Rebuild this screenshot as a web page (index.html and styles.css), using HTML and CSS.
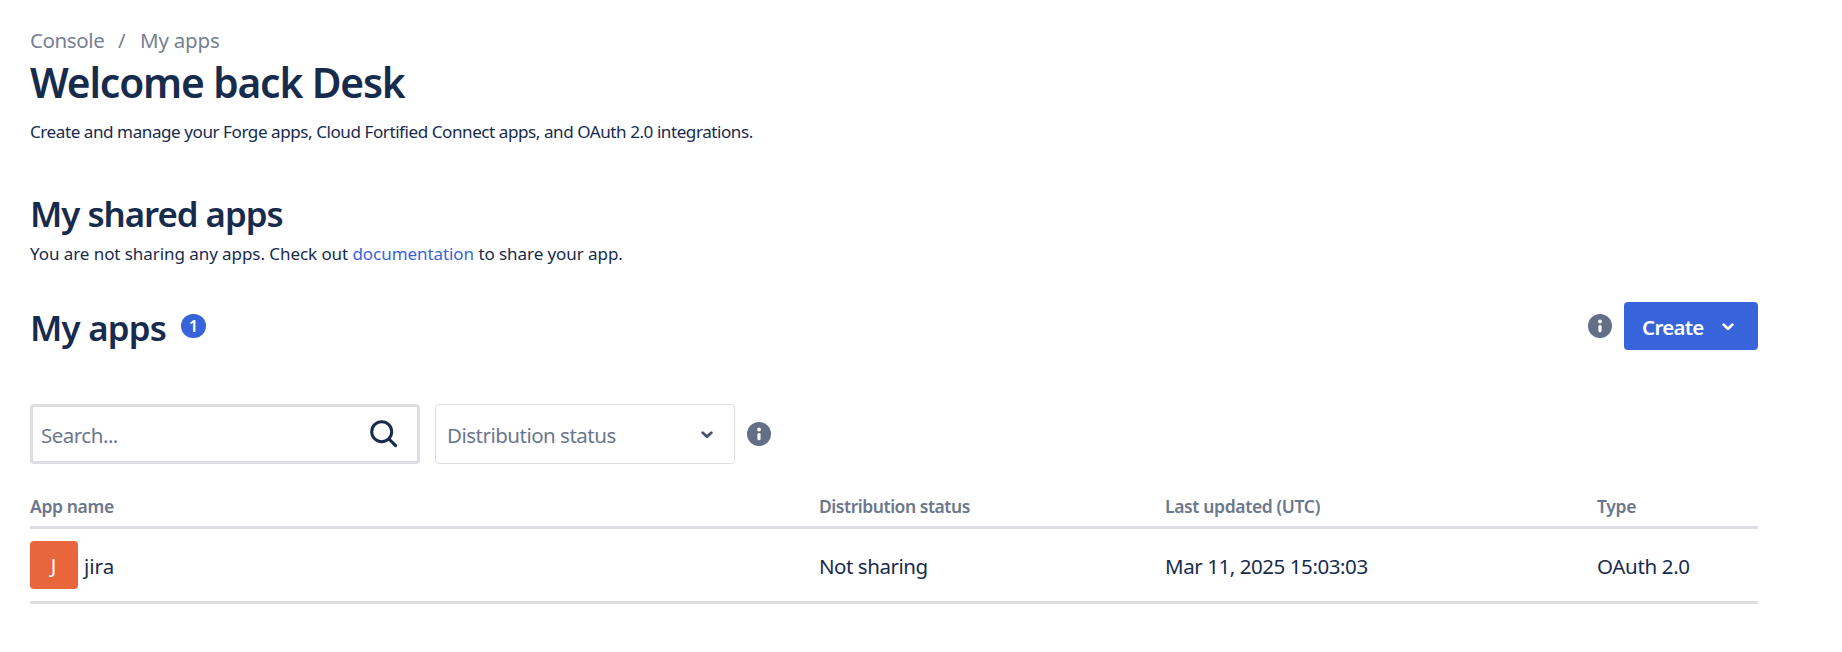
FILE: index.html
```html
<!DOCTYPE html>
<html lang="en">
<head>
<meta charset="utf-8">
<title>My apps</title>
<link rel="stylesheet" href="styles.css">
</head>
<body>
<main class="page">
  <nav class="breadcrumbs"><a class="crumb-root">Console</a><span class="crumb-sep">/</span><a class="crumb-current">My apps</a></nav>
  <h1 class="title">Welcome back Desk</h1>
  <p class="lead">Create and manage your Forge apps, Cloud Fortified Connect apps, and OAuth 2.0 integrations.</p>

  <h2 class="heading heading-shared">My shared apps</h2>
  <p class="shared-note">You are not sharing any apps. Check out <a class="link">documentation</a> to share your app.</p>

  <header class="apps-header">
    <h2 class="heading heading-apps">My apps</h2>
    <span class="badge">1</span>
    <div class="actions">
      <svg class="info" viewBox="0 0 24 24"><circle cx="12" cy="12" r="12" fill="#626f86"/><circle cx="12" cy="7.5" r="1.9" fill="#fff"/><rect x="10.4" y="11" width="3.2" height="7.2" rx="1.5" fill="#fff"/></svg>
      <button class="create"><span class="create-text">Create</span><svg class="chevron" viewBox="0 0 12 8"><path d="M1.7 1.7 6 5.7l4.3-4" fill="none" stroke="currentColor" stroke-width="2.8" stroke-linecap="round" stroke-linejoin="round"/></svg></button>
    </div>
  </header>

  <div class="filters">
    <div class="search"><span class="filter-text">Search...</span><svg class="search-icon" viewBox="0 0 28 28"><circle cx="11.7" cy="11.7" r="10" fill="none" stroke="#172b4d" stroke-width="3"/><path d="m19 19 6.6 6.6" stroke="#172b4d" stroke-width="3" stroke-linecap="round"/></svg></div>
    <div class="select"><span class="filter-text">Distribution status</span><svg class="chevron" viewBox="0 0 12 8"><path d="M1.7 1.7 6 5.7l4.3-4" fill="none" stroke="currentColor" stroke-width="2.8" stroke-linecap="round" stroke-linejoin="round"/></svg></div>
    <svg class="info" viewBox="0 0 24 24"><circle cx="12" cy="12" r="12" fill="#626f86"/><circle cx="12" cy="7.5" r="1.9" fill="#fff"/><rect x="10.4" y="11" width="3.2" height="7.2" rx="1.5" fill="#fff"/></svg>
  </div>

  <section class="table">
    <div class="row row-head"><span class="col-name">App name</span><span class="col-status">Distribution status</span><span class="col-updated">Last updated (UTC)</span><span class="col-type">Type</span></div>
    <div class="row row-body"><div class="app"><span class="avatar">J</span><span class="cell">jira</span></div><span class="cell col-status">Not sharing</span><span class="cell col-updated">Mar 11, 2025 15:03:03</span><span class="cell col-type">OAuth 2.0</span></div>
  </section>
</main>
</body>
</html>
```
FILE: styles.css
```css
* { box-sizing: border-box; }
body { margin: 0; background: #fff; color: #172b4d; font-family: "Noto Sans", "Open Sans", sans-serif; white-space: nowrap; }
h1, h2, p { margin: 0; }
.page { width: 1758px; padding: 25px 0 0 30px; }
.breadcrumbs { display: flex; height: 30px; line-height: 30px; font-size: 20.5px; color: #758195; }
.crumb-root { width: 88px; letter-spacing: -0.4px; }
.crumb-sep { width: 22px; }
.crumb-current { letter-spacing: -0.2px; }
.title { margin-top: 3px; font-size: 40.7px; line-height: 48px; font-weight: 600; letter-spacing: -1.14px; }
.lead { margin-top: 14px; font-size: 17.1px; line-height: 24px; letter-spacing: -0.455px; }
.heading { font-size: 34.8px; line-height: 42px; font-weight: 600; }
.heading-shared { margin-top: 49px; letter-spacing: -1.02px; }
.shared-note { margin-top: 7px; font-size: 17px; line-height: 24px; letter-spacing: -0.065px; }
.link { color: #3864db; }
.apps-header { display: flex; height: 48px; margin-top: 36px; }
.heading-apps { width: 151px; padding-top: 5px; letter-spacing: -0.75px; }
.badge { width: 25px; height: 24px; margin-top: 12px; border-radius: 12px; background: #3864db; color: #fff; font-size: 16.5px; line-height: 24px; font-weight: 600; text-align: center; }
.actions { display: flex; gap: 12px; align-items: center; margin-left: auto; }
.info { width: 24px; height: 24px; flex: none; }
.create { display: flex; align-items: center; justify-content: space-between; width: 134px; height: 48px; padding: 0 24px 0 18px; border: 0; border-radius: 4px; background: #3864db; color: #fff; font: 600 20.5px/30px "Noto Sans", sans-serif; }
.create-text { padding-top: 2px; letter-spacing: -0.7px; }
.chevron { width: 12px; height: 8px; margin-top: 1px; flex: none; }
.filters { display: flex; align-items: center; height: 60px; margin-top: 54px; font-size: 20.5px; color: #6b778c; }
.filter-text { padding-top: 2px; letter-spacing: -0.5px; }
.search { display: flex; align-items: center; justify-content: space-between; width: 390px; height: 60px; margin-right: 15px; padding: 0 19px 0 8px; border: 3px solid #dddee3; border-radius: 4px; }
.search-icon { width: 28px; height: 28px; }
.select { display: flex; align-items: center; justify-content: space-between; width: 300px; height: 60px; margin-right: 12px; padding: 0 21px 0 11px; border: 1px solid #dddee3; border-radius: 4px; }
.select .chevron { color: #44546f; }
.table { padding-top: 30px; }
.row { display: grid; grid-template-columns: 789px 346px 432px 161px; border-bottom: 3px solid #dddee3; }
.row-head { height: 35px; font-size: 17.5px; line-height: 24px; font-weight: 600; color: #6b778c; }
.row-body { height: 75px; align-items: center; font-size: 20.5px; }
.col-name { letter-spacing: -0.36px; }
.col-status { letter-spacing: -0.46px; }
.col-updated { letter-spacing: -0.36px; }
.col-type { letter-spacing: -0.33px; }
.row-body .col-updated { letter-spacing: -0.43px; }
.cell { padding-top: 2px; }
.app { display: flex; align-items: center; gap: 6px; }
.avatar { width: 48px; height: 48px; padding-right: 1px; border-radius: 4px; background: #e9663d; color: #fff; line-height: 49px; text-align: center; }
```
